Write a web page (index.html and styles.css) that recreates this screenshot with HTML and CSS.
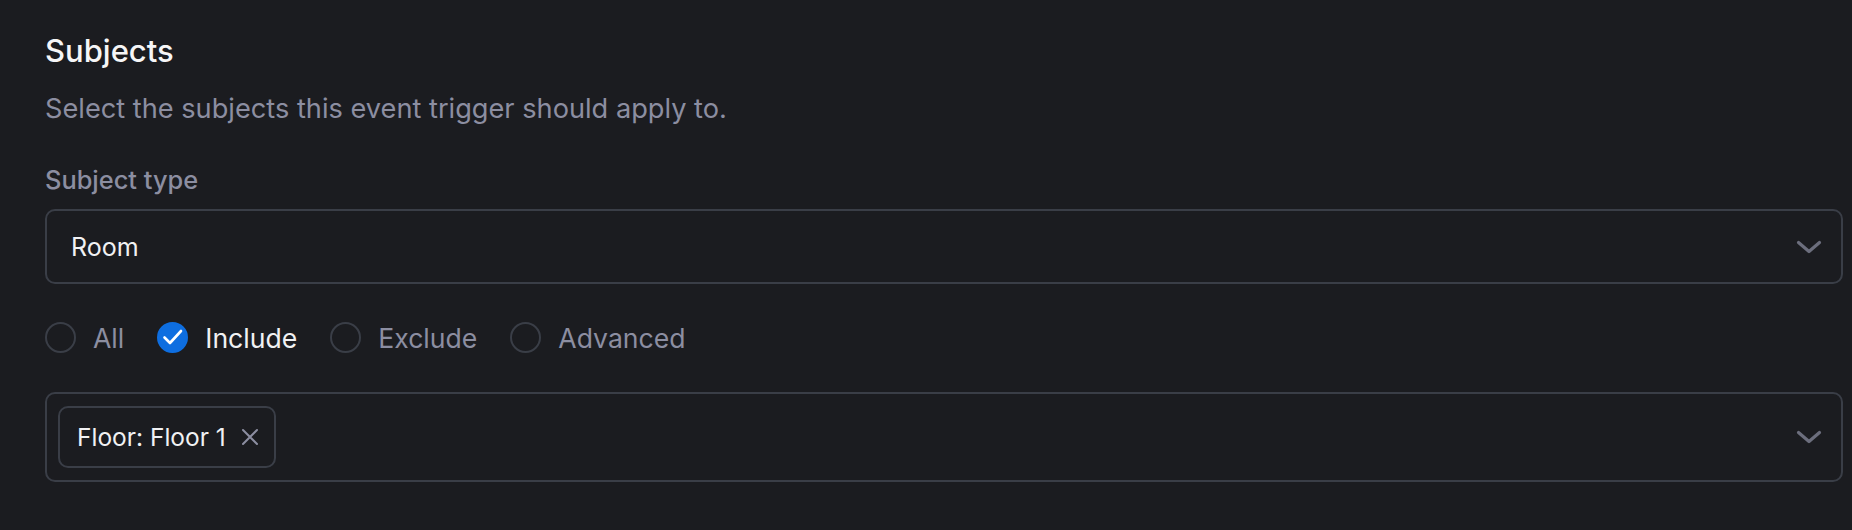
FILE: index.html
```html
<!DOCTYPE html>
<html lang="en">
<head>
<meta charset="utf-8">
<title>Subjects</title>
<link rel="stylesheet" href="styles.css">
</head>
<body>
<main class="section">
  <h2 class="title">Subjects</h2>
  <p class="desc">Select the subjects this event trigger should apply to.</p>
  <div class="field-label">Subject type</div>
  <div class="select">
    <span class="select-value">Room</span>
    <svg class="chevron" width="26" height="14" viewBox="0 0 26 14"><path d="M2.5 2.5 L13 11.5 L23.5 2.5" fill="none" stroke="currentColor" stroke-width="3.2" stroke-linecap="round" stroke-linejoin="round"/></svg>
  </div>
  <div class="radios">
    <div class="radio"><span class="dot"></span><span class="radio-label">All</span></div>
    <div class="radio checked"><span class="dot"><svg width="27" height="27" viewBox="0 0 27 27"><path d="M5.5 13.5 L11 19 L22 7" fill="none" stroke="#ffffff" stroke-width="2.6" stroke-linecap="round" stroke-linejoin="round"/></svg></span><span class="radio-label">Include</span></div>
    <div class="radio"><span class="dot"></span><span class="radio-label">Exclude</span></div>
    <div class="radio"><span class="dot"></span><span class="radio-label">Advanced</span></div>
  </div>
  <div class="multi">
    <div class="tags">
      <span class="tag">Floor: Floor 1<svg class="tag-x" width="18" height="18" viewBox="0 0 18 18"><path d="M2 2 L16 16 M16 2 L2 16" fill="none" stroke="currentColor" stroke-width="2" stroke-linecap="round"/></svg></span>
    </div>
    <svg class="chevron" width="26" height="14" viewBox="0 0 26 14"><path d="M2.5 2.5 L13 11.5 L23.5 2.5" fill="none" stroke="currentColor" stroke-width="3.2" stroke-linecap="round" stroke-linejoin="round"/></svg>
  </div>
</main>
</body>
</html>
```
FILE: styles.css
```css
* { box-sizing: border-box; }
html, body {
  margin: 0;
  padding: 0;
  background: #1b1c20;
}
body {
  font-family: Inter, "Noto Sans", sans-serif;
  color: #ececef;
  height: 530px;
  overflow: hidden;
}
.section {
  display: flex;
  flex-direction: column;
  padding: 33px 9px 0 45px;
}
.title {
  margin: 0;
  font-size: 31px;
  line-height: 36px;
  font-weight: 500;
  color: #f6f6f7;
}
.desc {
  margin: 24px 0 0;
  font-size: 27.2px;
  line-height: 32px;
  color: #8c8ea1;
}
.field-label {
  margin-top: 40px;
  font-size: 25.4px;
  line-height: 30px;
  font-weight: 500;
  color: #8c8ea1;
}
.select {
  margin-top: 14px;
  height: 75px;
  border: 2px solid #3a3e47;
  border-radius: 10px;
  display: flex;
  align-items: center;
  justify-content: space-between;
  padding: 0 19px 0 24px;
}
.select-value {
  font-size: 25px;
  line-height: 30px;
  color: #f1f1f3;
}
.chevron {
  color: #6c6e7d;
  flex: none;
}
.radios {
  margin-top: 38px;
  display: flex;
  align-items: center;
  gap: 33px;
  height: 31px;
}
.radio {
  display: flex;
  align-items: center;
  gap: 17px;
}
.dot {
  width: 31px;
  height: 31px;
  border-radius: 50%;
  border: 2px solid #3a3e47;
  display: flex;
  align-items: center;
  justify-content: center;
}
.radio.checked .dot {
  background: #0e6ee0;
  border-color: #0e6ee0;
}
.radio-label {
  font-size: 26.6px;
  line-height: 32px;
  color: #8c8ea1;
}
.radio.checked .radio-label {
  color: #f1f1f3;
}
.multi {
  margin-top: 39px;
  height: 90px;
  border: 2px solid #3a3e47;
  border-radius: 10px;
  display: flex;
  align-items: center;
  justify-content: space-between;
  padding: 0 19px 0 11px;
}
.tags {
  display: flex;
  gap: 8px;
}
.tag {
  height: 62px;
  border: 2px solid #3a3e47;
  border-radius: 10px;
  display: inline-flex;
  align-items: center;
  gap: 15px;
  padding: 0 15px 0 17px;
  font-size: 24.5px;
  line-height: 30px;
  color: #f1f1f3;
}
.tag-x {
  color: #8c8ea1;
}
```
